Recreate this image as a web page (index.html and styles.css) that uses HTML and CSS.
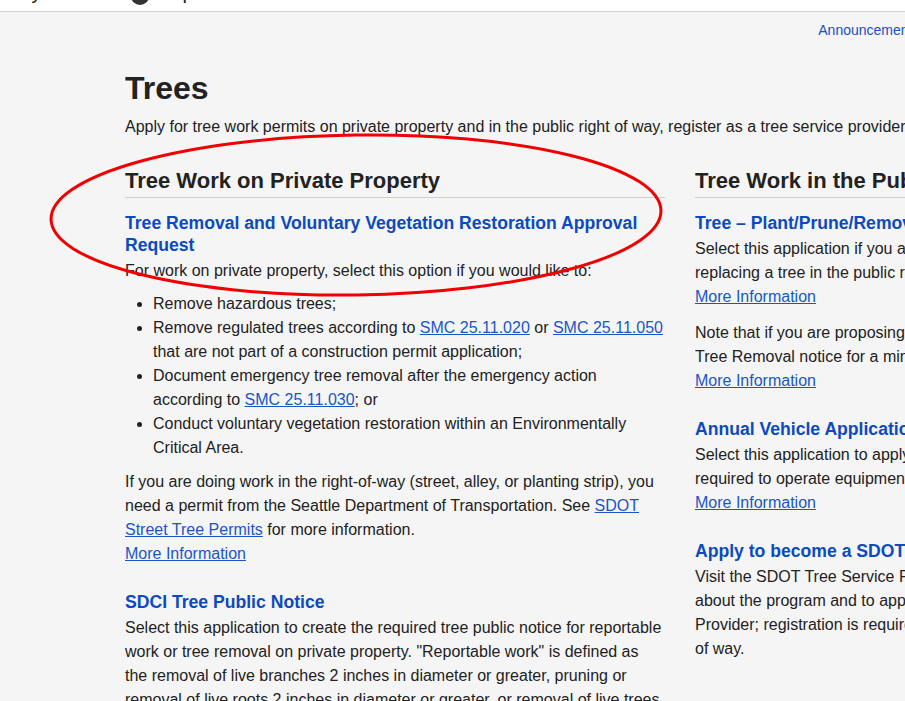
FILE: index.html
```html
<!DOCTYPE html>
<html lang="en">
<head>
<meta charset="utf-8">
<title>Trees</title>
<link rel="stylesheet" href="styles.css">
</head>
<body>
<div class="page">
  <header class="topbar">
    <div class="topbar-inner">
      <span class="brand">City</span>
      <svg class="logo" width="18" height="18" viewBox="0 0 18 18"><circle cx="9" cy="9" r="9" fill="#333"/></svg>
      <span class="brand">Help</span>
    </div>
  </header>
  <nav class="subnav">
    <a href="#">Announcements</a>
    <a href="#">Help Center</a>
    <a href="#">Contact Us</a>
    <a href="#">Sign In</a>
  </nav>
  <main class="container">
    <h1 class="title">Trees</h1>
    <p class="lead">Apply for tree work permits on private property and in the public right of way, register as a tree service provider, or create a tree public notice.</p>
    <div class="cols">
      <section class="col">
        <h2 class="section-title">Tree Work on Private Property</h2>
        <div class="app">
          <h3 class="app-title"><a href="#">Tree Removal and Voluntary Vegetation Restoration Approval Request</a></h3>
          <p class="intro">For work on private property, select this option if you would like to:</p>
          <ul class="list">
            <li>Remove hazardous trees;</li>
            <li>Remove regulated trees according to <a class="ul" href="#">SMC 25.11.020</a> or <a class="ul" href="#">SMC 25.11.050</a> that are not part of a construction permit application;</li>
            <li>Document emergency tree removal after the emergency action according to <a class="ul" href="#">SMC 25.11.030</a>; or</li>
            <li>Conduct voluntary vegetation restoration within an Environmentally Critical Area.</li>
          </ul>
          <p>If you are doing work in the right-of-way (street, alley, or planting strip), you need a permit from the Seattle Department of Transportation. See <a class="ul" href="#">SDOT Street Tree Permits</a> for more information.<br><a class="ul" href="#">More Information</a></p>
        </div>
        <div class="app">
          <h3 class="app-title"><a href="#">SDCI Tree Public Notice</a></h3>
          <p>Select this application to create the required tree public notice for reportable work or tree removal on private property. "Reportable work" is defined as the removal of live branches 2 inches in diameter or greater, pruning or removal of live roots 2 inches in diameter or greater, or removal of live trees.</p>
        </div>
      </section>
      <section class="col">
        <h2 class="section-title">Tree Work in the Public Right of Way</h2>
        <div class="app">
          <h3 class="app-title"><a href="#">Tree – Plant/Prune/Remove/Replace</a></h3>
          <p>Select this application if you are planting, pruning, removing, relocating, or replacing a tree in the public right of way.<br><a class="ul" href="#">More Information</a></p>
          <p>Note that if you are proposing to remove a tree you must also first post a Tree Removal notice for a minimum of 14 days.<br><a class="ul" href="#">More Information</a></p>
        </div>
        <div class="app">
          <h3 class="app-title"><a href="#">Annual Vehicle Application</a></h3>
          <p>Select this application to apply for the annual vehicle permit which is required to operate equipment in the right of way for tree work.<br><a class="ul" href="#">More Information</a></p>
        </div>
        <div class="app">
          <h3 class="app-title"><a href="#">Apply to become a SDOT Registered Tree Service Provider</a></h3>
          <p>Visit the SDOT Tree Service Provider Registration website to find out more about the program and to apply to become a Registered Tree Service Provider; registration is required to perform any tree work in the public right of way.</p>
        </div>
      </section>
    </div>
  </main>
  <svg class="annotation" width="1360" height="701" viewBox="0 0 1360 701" aria-hidden="true">
    <ellipse cx="356" cy="215" rx="305" ry="80" transform="rotate(-0.8 356 215)" fill="none" stroke="#f00000" stroke-width="3"/>
  </svg>
</div>
</body>
</html>
```

FILE: styles.css
```css
html {
  overflow: hidden;
}
body {
  margin: 0;
  background: #f5f5f5;
  color: #222;
  font-family: "Liberation Sans", Arial, sans-serif;
  font-size: 16px;
  line-height: 24px;
}
.page {
  position: relative;
  width: 1360px;
  height: 701px;
  overflow: hidden;
}
.topbar {
  height: 11px;
  background: #fff;
  border-bottom: 1px solid #cfcfcf;
  overflow: hidden;
}
.topbar-inner {
  display: flex;
  align-items: flex-end;
  height: 20px;
  margin-top: -18px;
  padding-left: 7px;
}
.brand {
  font-size: 20px;
  line-height: 20px;
  color: #222;
}
.brand:first-child {
  margin-right: 90px;
}
.logo {
  margin: 0 3px 0 0;
  position: relative;
  top: 3px;
}
.subnav {
  width: 1110px;
  margin: 0 auto;
  padding-top: 8px;
  display: flex;
  justify-content: flex-end;
  gap: 43px;
  font-size: 14px;
  line-height: 20px;
}
.subnav a:first-child {
  margin-right: -1px;
}
.subnav a {
  color: #1a4fc3;
  text-decoration: none;
}
.container {
  width: 1110px;
  margin: 0 auto;
}
.title {
  margin: 29px 0 8px;
  font-size: 32px;
  line-height: 38px;
  font-weight: bold;
  color: #222;
}
.lead {
  margin: 0 0 29px;
}
.cols {
  display: grid;
  grid-template-columns: 540px 540px;
  column-gap: 30px;
}
.section-title {
  margin: 0 0 14px;
  padding-bottom: 3px;
  border-bottom: 1px solid #cfcfcf;
  font-size: 22px;
  line-height: 26px;
  font-weight: bold;
  color: #222;
}
.app {
  margin-bottom: 25px;
}
.app-title {
  margin: 0 0 3px;
  font-size: 17.6px;
  line-height: 22px;
  font-weight: bold;
}
.app-title a {
  color: #0b4ac0;
  text-decoration: none;
}
p {
  margin: 0 0 12px;
}
.app p:last-child {
  margin-bottom: 0;
}
.intro {
  margin-bottom: 9px;
}
.list {
  margin: 0 0 10px;
  padding-left: 28px;
}
a.ul {
  color: #1a55c8;
  text-decoration: underline;
}
.annotation {
  position: absolute;
  left: 0;
  top: 0;
  pointer-events: none;
}
```
